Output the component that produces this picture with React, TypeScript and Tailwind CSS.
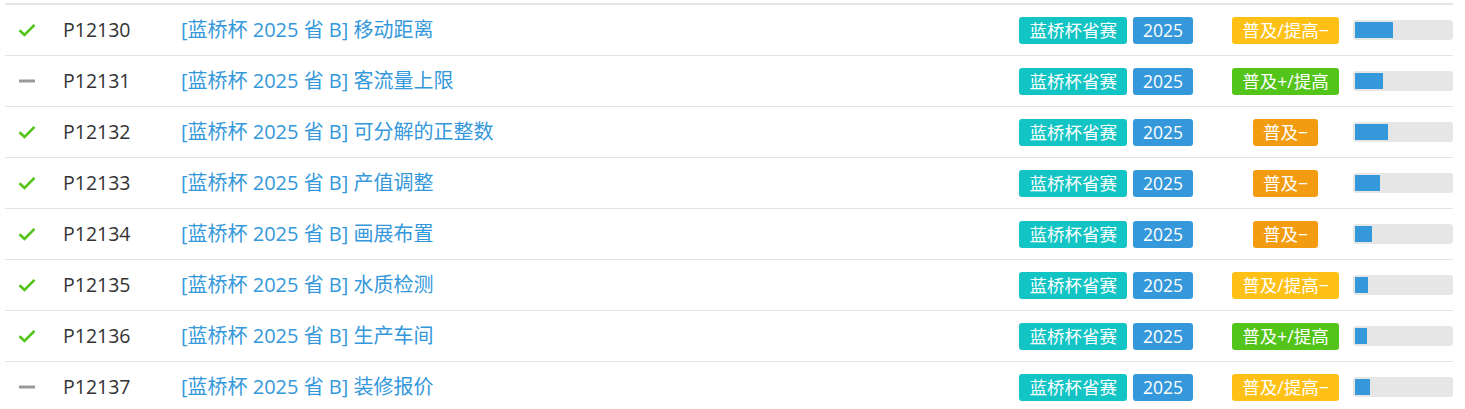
import React from "react";

type Row = {
  done: boolean;
  id: string;
  title: string;
  diff: "py" | "pp" | "p";
  fill: number;
};

const rows: Row[] = [
  { done: true, id: "P12130", title: "移动距离", diff: "py", fill: 38 },
  { done: false, id: "P12131", title: "客流量上限", diff: "pp", fill: 28 },
  { done: true, id: "P12132", title: "可分解的正整数", diff: "p", fill: 33 },
  { done: true, id: "P12133", title: "产值调整", diff: "p", fill: 25 },
  { done: true, id: "P12134", title: "画展布置", diff: "p", fill: 17 },
  { done: true, id: "P12135", title: "水质检测", diff: "py", fill: 13 },
  { done: true, id: "P12136", title: "生产车间", diff: "pp", fill: 12 },
  { done: false, id: "P12137", title: "装修报价", diff: "py", fill: 15 },
];

function Diff({ d }: { d: Row["diff"] }) {
  if (d === "py")
    return (
      <span className="h-[27px] leading-[27px] px-[10px] rounded-[3px] bg-[#ffc116] text-white text-[17.5px]">
        普及/提高−
      </span>
    );
  if (d === "pp")
    return (
      <span className="h-[27px] leading-[27px] px-[10px] rounded-[3px] bg-[#52c41a] text-white text-[17.5px]">
        普及+/提高
      </span>
    );
  return (
    <span className="h-[27px] leading-[27px] px-[10px] rounded-[3px] bg-[#f39c11] text-white text-[17.5px]">
      普及−
    </span>
  );
}

export default function App() {
  return (
    <div
      className="w-[1465px] h-[409px] bg-white overflow-hidden pt-[3px] pl-[5px]"
      style={{ fontFamily: '"Open Sans", "Noto Sans CJK SC", sans-serif' }}
    >
      <div className="w-[1448px] border-t-2 border-[#e5e5e5]">
        {rows.map((r) => (
          <div
            key={r.id}
            className="flex items-center h-[51px] border-b border-[#e5e5e5]"
          >
            <div className="w-[58px] pl-[13px] flex items-center">
              {r.done ? (
                <svg width="18" height="14" viewBox="0 0 18 14">
                  <path
                    d="M1.5 7.2 L6.5 12 L16.5 1.8"
                    fill="none"
                    stroke="#52c41a"
                    strokeWidth="2.6"
                  />
                </svg>
              ) : (
                <svg width="18" height="14" viewBox="0 0 18 14">
                  <rect x="1" y="5.5" width="16" height="3" fill="#999999" />
                </svg>
              )}
            </div>
            <div className="w-[118px] text-[19.5px] text-[#333333]">{r.id}</div>
            <div className="flex-1 text-[20px] text-[#3498db]">
              [蓝桥杯 2025 省 B] {r.title}
            </div>
            <div className="flex gap-[6px] text-white text-[17.5px]">
              <span className="h-[27px] leading-[27px] px-[10px] rounded-[3px] bg-[#13c4c4]">
                蓝桥杯省赛
              </span>
              <span className="h-[27px] leading-[27px] px-[10px] rounded-[3px] bg-[#3498db]">
                2025
              </span>
            </div>
            <div className="w-[121px] ml-[32px] flex justify-center">
              <Diff d={r.diff} />
            </div>
            <div className="ml-[7px] w-[100px] h-[20px] rounded-[3px] bg-[#e6e6e6] p-[2px]">
              <div
                className="h-[16px] bg-[#3498db]"
                style={{ width: `${r.fill}px` }}
              />
            </div>
          </div>
        ))}
      </div>
    </div>
  );
}
